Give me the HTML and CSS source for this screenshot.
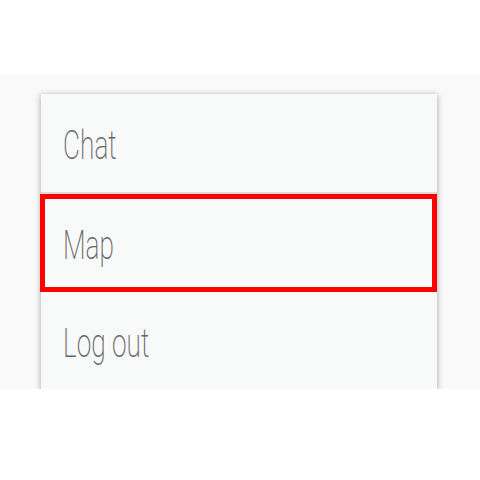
FILE: index.html
```html
<!DOCTYPE html>
<html>
<head>
<meta charset="utf-8">
<link rel="stylesheet" href="styles.css">
</head>
<body>
<div class="top"></div>
<div class="screen">
  <div class="card">
    <div class="item sep"><span class="label">Chat</span></div>
    <div class="item selected"><span class="label">Map</span></div>
    <div class="item"><span class="label">Log out</span></div>
  </div>
</div>
</body>
</html>
```
FILE: styles.css
```css
html, body {
  margin: 0;
  padding: 0;
  background: #ffffff;
}
.top {
  height: 75px;
}
.screen {
  height: 314px;
  background: #f9f9f9;
  overflow: hidden;
  padding-top: 19px;
  box-sizing: border-box;
}
.card {
  margin-left: 41px;
  width: 396px;
  background: #f8f9f9;
  box-shadow: 0 1px 6px rgba(0, 0, 0, 0.35);
}
.item {
  height: 98px;
  display: flex;
  align-items: center;
  padding-left: 22px;
  padding-top: 4px;
  box-sizing: border-box;
}
.sep {
  height: 100px;
  border-bottom: 2px solid #dcdcdc;
}
.selected {
  outline: 5px solid #ff0000;
  outline-offset: -5px;
  margin-left: -1px;
  padding-left: 23px;
}
.label {
  font-family: Roboto, "Liberation Sans", sans-serif;
  font-weight: 200;
  font-size: 41px;
  color: #666666;
  display: inline-block;
  transform: scaleX(0.64);
  transform-origin: left center;
  white-space: nowrap;
}
```
